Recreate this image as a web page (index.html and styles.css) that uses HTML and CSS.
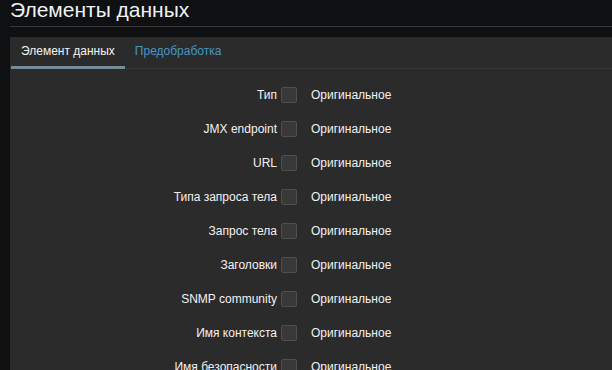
FILE: index.html
```html
<!DOCTYPE html>
<html lang="ru">
<head>
    <meta charset="UTF-8">
    <title>Элементы данных</title>
    <link rel="stylesheet" href="styles.css">
</head>
<body>

<div class="header">
    <h1>Элементы данных</h1>
</div>

<div class="panel">
    <ul class="tabs">
        <li class="tab active">Элемент данных</li>
        <li class="tab"><a href="#">Предобработка</a></li>
    </ul>

    <div class="form">
        <div class="row"><label>Тип</label><span class="box"></span><span class="value">Оригинальное</span></div>
        <div class="row"><label>JMX endpoint</label><span class="box"></span><span class="value">Оригинальное</span></div>
        <div class="row"><label>URL</label><span class="box"></span><span class="value">Оригинальное</span></div>
        <div class="row"><label>Типа запроса тела</label><span class="box"></span><span class="value">Оригинальное</span></div>
        <div class="row"><label>Запрос тела</label><span class="box"></span><span class="value">Оригинальное</span></div>
        <div class="row"><label>Заголовки</label><span class="box"></span><span class="value">Оригинальное</span></div>
        <div class="row"><label>SNMP community</label><span class="box"></span><span class="value">Оригинальное</span></div>
        <div class="row"><label>Имя контекста</label><span class="box"></span><span class="value">Оригинальное</span></div>
        <div class="row"><label>Имя безопасности</label><span class="box"></span><span class="value">Оригинальное</span></div>
    </div>
</div>

</body>
</html>
```

FILE: styles.css
```css
body {
    margin: 0;
    background: #0e1012;
    color: #f2f2f2;
    font-family: "Liberation Sans", Arial, sans-serif;
    font-size: 12px;
    overflow: hidden;
}
.header {
    margin-left: 10px;
    padding-bottom: 6px;
    border-bottom: 1px solid #383838;
}
h1 {
    margin: 0;
    font-size: 21px;
    font-weight: normal;
    line-height: 20px;
    color: #f2f2f2;
}
.panel {
    margin: 10px 0 0 10px;
    background: #2b2b2b;
    height: 400px;
}
.tabs {
    list-style: none;
    margin: 0;
    padding: 0 0 0 1px;
    display: flex;
    height: 31px;
    border-bottom: 1px solid #383838;
}
.tab {
    height: 29px;
    line-height: 29px;
    padding: 0 10px;
    border-bottom: 3px solid transparent;
    margin-bottom: -1px;
}
.tab.active {
    border-bottom-color: #768d99;
}
.tab a {
    color: #4796c4;
    text-decoration: none;
}
.form {
    padding-top: 14px;
    display: flex;
    flex-direction: column;
    gap: 10px;
}
.row {
    display: flex;
    align-items: center;
    height: 24px;
}
.row label {
    width: 267px;
    text-align: right;
    margin-right: 4px;
}
.box {
    width: 14px;
    height: 14px;
    border: 1px solid #4f4f4f;
    border-radius: 2px;
    background: #383838;
}
.value {
    margin-left: 14px;
}
```
